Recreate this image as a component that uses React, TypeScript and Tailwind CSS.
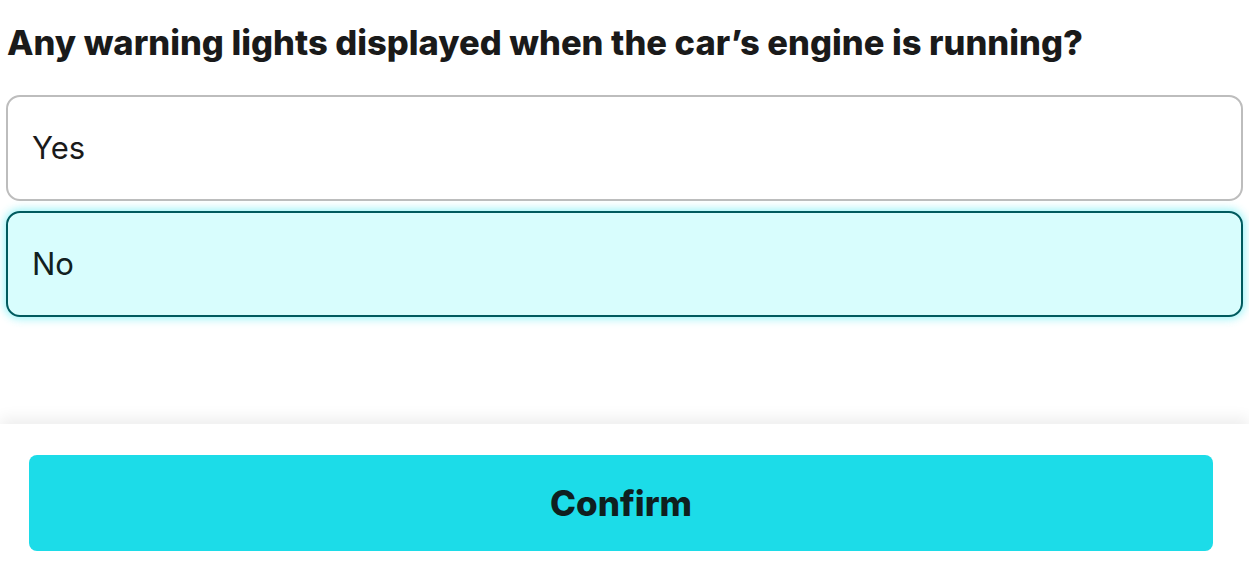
import React from "react";

export default function App() {
  return (
    <div className="w-[1249px] h-[572px] bg-white flex flex-col overflow-hidden" style={{ fontFamily: "Inter, 'Noto Sans', sans-serif" }}>
      <div className="flex-1 flex flex-col px-[6px] pt-[21px]">
        <h1 className="text-[34.5px] leading-[43px] font-extrabold text-[#1a1a1a] pl-[1px]">
          Any warning lights displayed when the car’s engine is running?
        </h1>
        <div className="mt-[31px] flex flex-col gap-[10px]">
          <button className="h-[106px] w-full rounded-[14px] border-[2px] border-[#bdbdbd] bg-white flex items-center px-[24px] text-left">
            <span className="text-[31px] text-[#1a1a1a]">Yes</span>
          </button>
          <button className="h-[106px] w-full rounded-[14px] border-[2px] border-[#005a5e] bg-[#d8fdfd] flex items-center px-[24px] text-left shadow-[0_0_8px_2px_rgba(40,230,240,0.45)]">
            <span className="text-[31px] text-[#102020]">No</span>
          </button>
        </div>
      </div>
      <div className="h-[148px] bg-white shadow-[0_-6px_14px_rgba(0,0,0,0.07)] px-[29px] pt-[31px] relative">
        <button className="w-[1184px] h-[96px] rounded-[8px] bg-[#1cdce8] flex items-center justify-center">
          <span className="text-[35px] font-extrabold text-[#0f1f1f]">Confirm</span>
        </button>
      </div>
    </div>
  );
}
